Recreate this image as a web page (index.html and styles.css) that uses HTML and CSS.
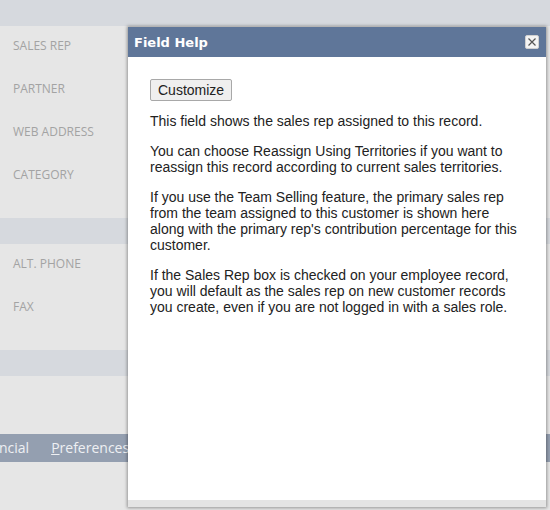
FILE: index.html
```html
<!DOCTYPE html>
<html>
<head>
<meta charset="utf-8">
<link rel="stylesheet" href="styles.css">
</head>
<body>
<div class="page">
  <div class="topbar"></div>
  <div class="section">
    <div class="row"><span class="label">SALES REP</span></div>
    <div class="row"><span class="label">PARTNER</span></div>
    <div class="row"><span class="label">WEB ADDRESS</span></div>
    <div class="row"><span class="label">CATEGORY</span></div>
  </div>
  <div class="band"></div>
  <div class="section">
    <div class="row"><span class="label">ALT. PHONE</span></div>
    <div class="row"><span class="label">FAX</span></div>
  </div>
  <div class="band"></div>
  <div class="spacer"></div>
  <div class="navbar">
    <span class="tab tab-cut">ncial</span>
    <span class="tab"><u>P</u>references</span>
  </div>
</div>

<div class="modal">
  <div class="modal-header">
    <span class="modal-title">Field Help</span>
    <span class="close">
      <svg width="10" height="10" viewBox="0 0 10 10"><path d="M1.5 1.5 L8.5 8.5 M8.5 1.5 L1.5 8.5" stroke="#555" stroke-width="1.2" fill="none"/></svg>
    </span>
  </div>
  <div class="modal-body">
    <button class="btn">Customize</button>
    <p>This field shows the sales rep assigned to this record.</p>
    <p>You can choose Reassign Using Territories if you want to reassign this record according to current sales territories.</p>
    <p>If you use the Team Selling feature, the primary sales rep from the team assigned to this customer is shown here along with the primary rep's contribution percentage for this customer.</p>
    <p>If the Sales Rep box is checked on your employee record, you will default as the sales rep on new customer records you create, even if you are not logged in with a sales role.</p>
  </div>
  <div class="modal-footer"></div>
</div>
</body>
</html>
```
FILE: styles.css
```css
html, body {
  margin: 0;
  padding: 0;
}
body {
  background: #e6e6e6;
  width: 550px;
  height: 510px;
  overflow: hidden;
  position: relative;
  font-family: "Open Sans", sans-serif;
}
.page {
  display: flex;
  flex-direction: column;
}
.topbar {
  height: 26px;
  background: #d6d9de;
}
.section {
  display: flex;
  flex-direction: column;
  margin-bottom: 20px;
}
.row {
  height: 43px;
  box-sizing: border-box;
  padding: 7px 0 0 13px;
}
.label {
  font-size: 12px;
  line-height: 16px;
  color: #a3a3a3;
}
.band {
  height: 26px;
  background: #d6d9de;
}
.spacer {
  height: 58px;
}
.navbar {
  height: 28px;
  background: #949fb0;
  display: flex;
  align-items: center;
  gap: 22px;
}
.tab {
  font-size: 14px;
  color: #eef0f3;
  line-height: 20px;
}
.tab-cut {
  margin-left: -1px;
}

.modal {
  position: absolute;
  left: 128px;
  top: 27px;
  width: 418px;
  height: 480px;
  background: #ffffff;
  box-shadow: 0 0 3px 1px rgba(0, 0, 0, 0.35);
  display: flex;
  flex-direction: column;
}
.modal-header {
  height: 30px;
  background: #5f7699;
  display: flex;
  align-items: center;
  justify-content: space-between;
  padding: 0 7px 0 6px;
}
.modal-title {
  font-family: "DejaVu Sans", Verdana, sans-serif;
  font-weight: bold;
  font-size: 13px;
  color: #ffffff;
}
.close {
  width: 12px;
  height: 12px;
  background: #f4f4f4;
  border: 1px solid #d0d0d0;
  border-radius: 2px;
  display: flex;
  align-items: center;
  justify-content: center;
}
.modal-body {
  flex: 1;
  padding: 22px 24px 0 22px;
  font-family: "Liberation Sans", Arial, sans-serif;
  font-size: 14px;
  line-height: 16px;
  color: #222222;
}
.btn {
  font-family: "Liberation Sans", Arial, sans-serif;
  font-size: 14px;
  color: #222;
  background: #efefef;
  border: 1px solid #a8a8a8;
  border-radius: 2px;
  height: 22px;
  padding: 0 7px;
  margin: 0 0 5px 0;
}
.modal-body p {
  margin: 7px 0 14px 0;
}
.modal-footer {
  height: 7px;
  background: #e4e4e4;
}
```
